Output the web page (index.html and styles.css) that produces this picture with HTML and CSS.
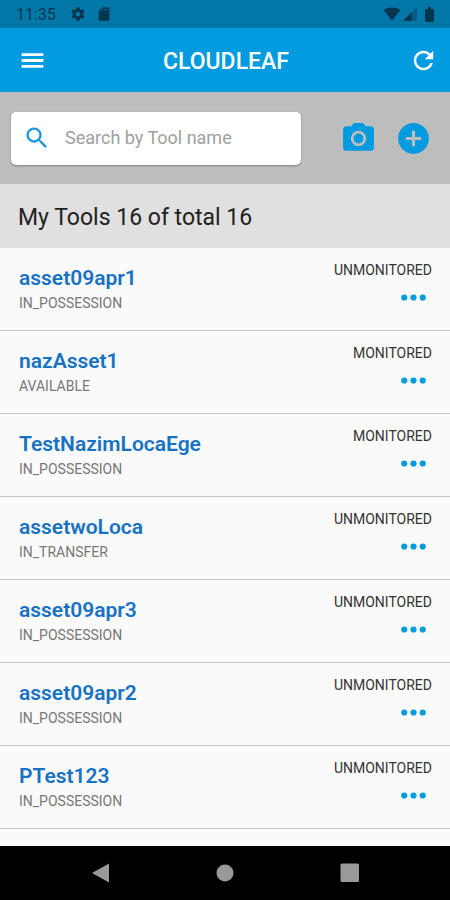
FILE: index.html
```html
<!DOCTYPE html>
<html lang="en">
<head>
<meta charset="utf-8">
<meta name="viewport" content="width=device-width, initial-scale=1">
<title>Cloudleaf</title>
<link rel="stylesheet" href="styles.css">
</head>
<body>
<svg class="defs" aria-hidden="true">
  <symbol id="more" viewBox="0 0 24 24"><circle cx="6" cy="12" r="2"/><circle cx="12" cy="12" r="2"/><circle cx="18" cy="12" r="2"/></symbol>
</svg>
<div class="status-bar">
  <span class="clock">11:35</span>
  <svg class="status-icon gear" viewBox="0 0 24 24"><path d="M19.43 12.98c.04-.32.07-.64.07-.98s-.03-.66-.07-.98l2.11-1.65c.19-.15.24-.42.12-.64l-2-3.46c-.12-.22-.39-.3-.61-.22l-2.49 1c-.52-.4-1.08-.73-1.69-.98l-.38-2.65C14.46 2.18 14.25 2 14 2h-4c-.25 0-.46.18-.49.42l-.38 2.65c-.61.25-1.17.59-1.69.98l-2.49-1c-.23-.09-.49 0-.61.22l-2 3.46c-.13.22-.07.49.12.64l2.11 1.65c-.04.32-.07.65-.07.98s.03.66.07.98l-2.11 1.65c-.19.15-.24.42-.12.64l2 3.46c.12.22.39.3.61.22l2.49-1c.52.4 1.08.73 1.69.98l.38 2.65c.03.24.24.42.49.42h4c.25 0 .46-.18.49-.42l.38-2.65c.61-.25 1.17-.59 1.69-.98l2.49 1c.23.09.49 0 .61-.22l2-3.46c.12-.22.07-.49-.12-.64l-2.11-1.65zM12 15.5c-1.93 0-3.5-1.57-3.5-3.5s1.57-3.5 3.5-3.5 3.5 1.57 3.5 3.5-1.57 3.5-3.5 3.5z"/></svg>
  <svg class="status-icon card" viewBox="0 0 24 24"><path d="M18 2h-8L4 8v12c0 1.100.9 2 2 2h12c1.100 0 2-.9 2-2V4c0-1.100-.9-2-2-2z"/><path class="pins" d="M9 5.500h8.500"/></svg>
  <span class="signals">
    <svg class="wifi" viewBox="0 0 18 14"><path d="M9 13.500.5 3C5.500-.3 12.500-.3 17.500 3z"/></svg>
    <svg class="cell" viewBox="0 0 14 14"><path class="faint" d="M0 14 14 0v14z"/><path d="M0 14 8.500 5.500V14z"/></svg>
    <svg class="battery" viewBox="0 0 9 15"><path d="M3 0h3v2h2q1 0 1 1v11q0 1-1 1H1q-1 0-1-1V3q0-1 1-1h2z"/></svg>
  </span>
</div>
<header class="app-bar">
  <button class="icon-button" type="button" aria-label="Menu"><svg class="bar-icon" viewBox="0 0 24 24"><path d="M3 18h18v-2.300H3zM3 13.150h18v-2.300H3zM3 6v2.300h18V6z"/></svg></button>
  <h1>CLOUDLEAF</h1>
  <button class="icon-button" type="button" aria-label="Refresh"><svg class="bar-icon" viewBox="0 0 24 24"><path d="M17.650 6.350C16.200 4.900 14.210 4 12 4c-4.420 0-7.990 3.580-7.990 8s3.570 8 7.990 8c3.730 0 6.840-2.550 7.730-6h-2.080c-.82 2.330-3.040 4-5.650 4-3.310 0-6-2.690-6-6s2.690-6 6-6c1.660 0 3.140.69 4.220 1.780L13 11h7V4l-2.350 2.350z"/></svg></button>
</header>
<main>
  <form class="search-bar">
    <label class="search-box">
      <svg class="search-icon" viewBox="0 0 24 24" aria-label="Search"><path d="M15.500 14h-.79l-.28-.27C15.410 12.590 16 11.110 16 9.500 16 5.910 13.090 3 9.500 3S3 5.910 3 9.500 5.910 16 9.500 16c1.610 0 3.090-.59 4.230-1.570l.27.28v.79l5 4.990L20.490 19l-4.990-5zm-6 0C7.010 14 5 11.990 5 9.500S7.010 5 9.500 5 14 7.010 14 9.500 11.990 14 9.500 14z"/></svg>
      <input type="text" placeholder="Search by Tool name">
    </label>
    <div class="actions">
      <button class="icon-button" type="button" aria-label="Scan with camera"><svg class="action-icon" viewBox="0 0 24 24"><path fill-rule="evenodd" d="M9 2 7.170 4H4c-1.100 0-2 .9-2 2v12c0 1.100.9 2 2 2h16c1.100 0 2-.9 2-2V6c0-1.100-.9-2-2-2h-3.170L15 2H9zM12 17a5 5 0 1 1 0-10 5 5 0 0 1 0 10zM12 15.200a3.200 3.200 0 1 0 0-6.400 3.200 3.200 0 0 0 0 6.400z"/></svg></button>
      <button class="icon-button" type="button" aria-label="Add tool"><svg class="action-icon" viewBox="0 0 24 24"><path d="M12 2C6.480 2 2 6.480 2 12s4.480 10 10 10 10-4.480 10-10S17.520 2 12 2zm5 11h-4v4h-2v-4H7v-2h4V7h2v4h4v2z"/></svg></button>
    </div>
  </form>
  <h2>My Tools 16 of total 16</h2>
  <ul class="tools">
    <li><div class="tool"><a href="#">asset09apr1</a><p>IN_POSSESSION</p></div><div class="monitor"><span>UNMONITORED</span><button class="icon-button" type="button" aria-label="More"><svg class="more-icon"><use href="#more"/></svg></button></div></li>
    <li><div class="tool"><a href="#">nazAsset1</a><p>AVAILABLE</p></div><div class="monitor"><span>MONITORED</span><button class="icon-button" type="button" aria-label="More"><svg class="more-icon"><use href="#more"/></svg></button></div></li>
    <li><div class="tool"><a href="#">TestNazimLocaEge</a><p>IN_POSSESSION</p></div><div class="monitor"><span>MONITORED</span><button class="icon-button" type="button" aria-label="More"><svg class="more-icon"><use href="#more"/></svg></button></div></li>
    <li><div class="tool"><a href="#">assetwoLoca</a><p>IN_TRANSFER</p></div><div class="monitor"><span>UNMONITORED</span><button class="icon-button" type="button" aria-label="More"><svg class="more-icon"><use href="#more"/></svg></button></div></li>
    <li><div class="tool"><a href="#">asset09apr3</a><p>IN_POSSESSION</p></div><div class="monitor"><span>UNMONITORED</span><button class="icon-button" type="button" aria-label="More"><svg class="more-icon"><use href="#more"/></svg></button></div></li>
    <li><div class="tool"><a href="#">asset09apr2</a><p>IN_POSSESSION</p></div><div class="monitor"><span>UNMONITORED</span><button class="icon-button" type="button" aria-label="More"><svg class="more-icon"><use href="#more"/></svg></button></div></li>
    <li><div class="tool"><a href="#">PTest123</a><p>IN_POSSESSION</p></div><div class="monitor"><span>UNMONITORED</span><button class="icon-button" type="button" aria-label="More"><svg class="more-icon"><use href="#more"/></svg></button></div></li>
  </ul>
</main>
<nav class="system-nav">
  <button class="icon-button" type="button" aria-label="Back"><svg class="nav-icon" viewBox="0 0 20 20"><path d="M19 .5v19L2 10z"/></svg></button>
  <button class="icon-button" type="button" aria-label="Home"><svg class="nav-icon" viewBox="0 0 20 20"><circle cx="10" cy="10" r="8.500"/></svg></button>
  <button class="icon-button" type="button" aria-label="Recent apps"><svg class="nav-icon" viewBox="0 0 20 20"><rect x=".5" y=".5" width="18.500" height="18.500" rx="1.500"/></svg></button>
</nav>
</body>
</html>
```

FILE: styles.css
```css
* {
  box-sizing: border-box;
}

body {
  margin: 0;
  min-height: 100vh;
  display: flex;
  flex-direction: column;
  background: #fafafa;
  color: #222;
  font-family: Roboto, "Liberation Sans", sans-serif;
}

svg {
  display: block;
  fill: currentColor;
}

.defs {
  position: absolute;
  width: 0;
  height: 0;
}

h1,
h2,
p,
ul {
  margin: 0;
  padding: 0;
}

.icon-button {
  display: block;
  padding: 0;
  border: 0;
  background: none;
  color: inherit;
}

.status-bar {
  height: 28px;
  padding: 0 16px;
  display: flex;
  align-items: center;
  background: #0277a8;
  color: #04374f;
}

.clock {
  padding-top: 2px;
  font-size: 16px;
  line-height: 20px;
}

.status-icon {
  width: 16px;
  height: 16px;
}

.gear {
  margin-left: 14px;
}

.card {
  margin-left: 10px;
}

.pins {
  stroke: #0277a8;
  stroke-width: 2;
  stroke-dasharray: 2 1;
}

.signals {
  margin-left: auto;
  display: flex;
  align-items: center;
}

.wifi {
  width: 18px;
  height: 14px;
}

.cell {
  width: 14px;
  height: 14px;
  margin-left: 2px;
}

.faint {
  opacity: 0.4;
}

.battery {
  width: 9px;
  height: 15px;
  margin-left: 8px;
}

.app-bar {
  height: 64px;
  padding: 0 12px 0 18px;
  display: flex;
  align-items: center;
  justify-content: space-between;
  background: #039be0;
  color: #fff;
}

h1 {
  padding: 4px 4px 0 0;
  font-size: 23px;
  font-weight: 500;
  line-height: 28px;
}

.bar-icon {
  width: 29px;
  height: 29px;
}

main {
  flex: 1;
}

.search-bar {
  height: 92px;
  padding: 0 18px 0 11px;
  display: flex;
  align-items: center;
  justify-content: space-between;
  background: #bdbdbd;
}

.search-box {
  flex: 0 1 290px;
  min-width: 0;
  height: 53px;
  padding: 0 12px;
  display: flex;
  align-items: center;
  gap: 14px;
  border-radius: 5px;
  background: #fff;
  box-shadow: 0 1px 2px rgba(0, 0, 0, 0.35);
}

.search-icon {
  flex: none;
  width: 28px;
  height: 28px;
  color: #1d96dc;
}

.search-box input {
  flex: 1;
  min-width: 0;
  padding: 0;
  border: 0;
  outline: 0;
  background: none;
  color: #222;
  font: 18px/24px Roboto, "Liberation Sans", sans-serif;
}

.search-box input::placeholder {
  color: #a0a0a0;
}

.actions {
  display: flex;
  gap: 18px;
  color: #039be0;
}

.action-icon,
.more-icon {
  width: 37px;
  height: 37px;
}

h2 {
  padding: 20px 18px 16px;
  background: #e0e0e0;
  font-size: 23px;
  font-weight: 400;
  line-height: 28px;
}

.tools {
  list-style: none;
}

.tools li {
  height: 83px;
  padding: 14px 18px 0 19px;
  display: flex;
  justify-content: space-between;
  border-bottom: 1px solid #c6c6c6;
}

.tool a {
  color: #1872c4;
  font-size: 21px;
  font-weight: 600;
  line-height: 32px;
  text-decoration: none;
}

.tool p {
  color: #777;
  font-size: 14px;
  line-height: 18px;
}

.monitor {
  display: flex;
  flex-direction: column;
  align-items: flex-end;
  color: #039be0;
}

.monitor span {
  color: #333;
  font-size: 14px;
  line-height: 17px;
}

.system-nav {
  height: 54px;
  padding: 0 90px;
  display: flex;
  align-items: center;
  justify-content: space-between;
  background: #000;
  color: #999;
}

.nav-icon {
  width: 20px;
  height: 20px;
}
```
